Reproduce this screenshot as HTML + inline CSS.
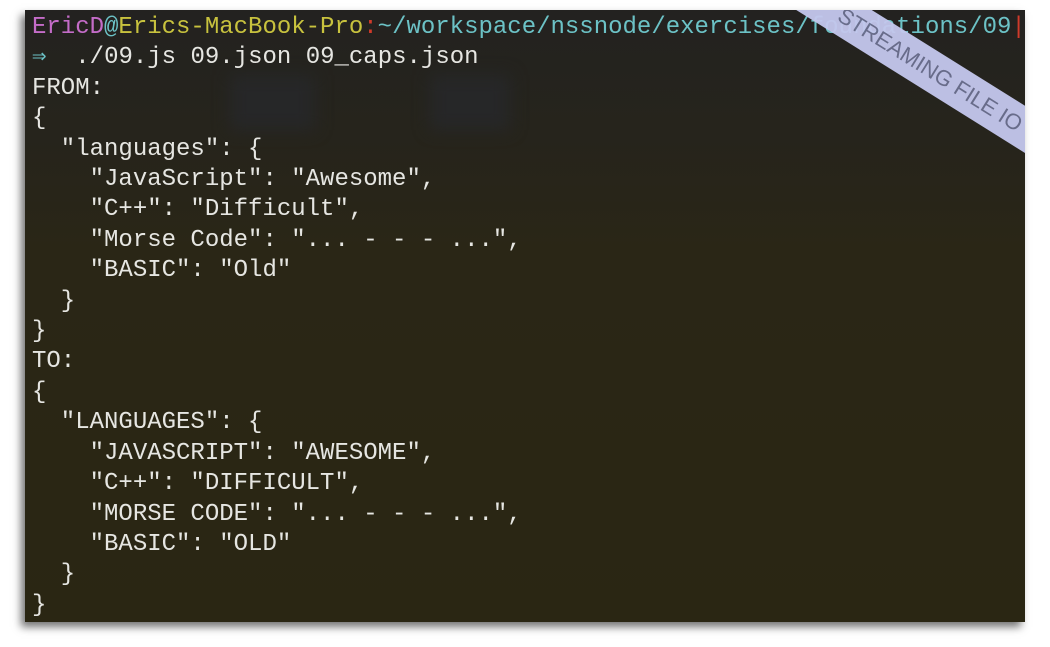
<!DOCTYPE html>
<html><head><meta charset="utf-8"><style>
html,body{margin:0;padding:0;background:#fff;width:1050px;height:647px;overflow:hidden}
.t{position:absolute;left:25px;top:10px;width:1000px;height:612px;overflow:hidden;
background:linear-gradient(180deg,#232220 0%,#26241c 20%,#2a2616 40%,#2a2613 100%);
box-shadow:-4px 5px 8px rgba(0,0,0,.55)}
.b1{position:absolute;left:205px;top:65px;width:85px;height:55px;background:#262728;filter:blur(8px)}
.b2{position:absolute;left:405px;top:65px;width:80px;height:55px;background:#262728;filter:blur(8px)}
pre{position:absolute;left:7px;top:3px;margin:0;font-family:"Liberation Mono",monospace;font-size:24px;line-height:30.4px;color:#e6e6e2;letter-spacing:0}
.m{color:#c46cc8}.c{color:#6cc2c6}.y{color:#c8c23e}.r{color:#d03a2a}.g{color:#7ac030}
.ban{position:absolute;left:695px;top:40px;width:420px;height:40px;background:#c5c8ee;transform:rotate(32deg);transform-origin:center;
font-family:"Liberation Sans",sans-serif;font-size:22px;color:#6c7090;text-align:center;line-height:40px;opacity:.95}
</style></head><body>
<div class="t">
<div class="b1"></div><div class="b2"></div>
<pre><span class="m">EricD</span><span class="c">@</span><span class="y">Erics-MacBook-Pro</span><span class="r">:</span><span class="c">~/workspace/nssnode/exercises/foundations/09</span><span class="r">|</span><span class="g">▌</span>
<span class="c">⇒</span>  ./09.js 09.json 09_caps.json
FROM:
{
  "languages": {
    "JavaScript": "Awesome",
    "C++": "Difficult",
    "Morse Code": "... - - - ...",
    "BASIC": "Old"
  }
}
TO:
{
  "LANGUAGES": {
    "JAVASCRIPT": "AWESOME",
    "C++": "DIFFICULT",
    "MORSE CODE": "... - - - ...",
    "BASIC": "OLD"
  }
}</pre>
<div class="ban">STREAMING FILE IO</div>
</div>
</body></html>
